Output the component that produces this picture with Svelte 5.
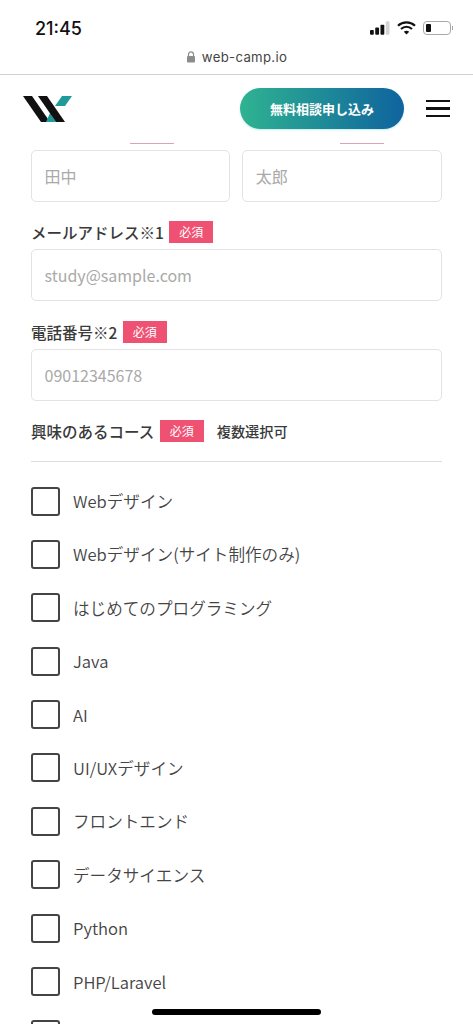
<script>
  const courses = [
    "Webデザイン",
    "Webデザイン(サイト制作のみ)",
    "はじめてのプログラミング",
    "Java",
    "AI",
    "UI/UXデザイン",
    "フロントエンド",
    "データサイエンス",
    "Python",
    "PHP/Laravel",
    "",
  ];
</script>

<div class="screen">
  <div class="status">
    <span class="time">21:45</span>
    <div class="status__icons">
      <svg width="20" height="14" viewBox="0 0 21 14">
        <rect x="0" y="9" width="4" height="5" rx="1" fill="#111" />
        <rect x="5.5" y="6.5" width="4" height="7.5" rx="1" fill="#111" />
        <rect x="11" y="3.5" width="4" height="10.5" rx="1" fill="#111" />
        <rect x="16.5" y="0" width="4" height="14" rx="1" fill="#d4d4d4" />
      </svg>
      <svg width="19" height="14" viewBox="0 0 19 14" fill="none" stroke="#111" stroke-width="2.2">
        <path d="M1 4.8 C5.8 0.3 13.2 0.3 18 4.8" />
        <path d="M4 8 C7.2 5 11.8 5 15 8" />
        <path d="M9.5 13.6 L6.8 10.8 C8.3 9.4 10.7 9.4 12.2 10.8 Z" fill="#111" stroke="none" />
      </svg>
      <div class="battery"><i></i></div>
      <div class="battery__cap"></div>
    </div>
  </div>

  <div class="urlbar">
    <svg width="10" height="12" viewBox="0 0 10 12">
      <path d="M2.5 5V3.4a2.5 2.5 0 0 1 5 0V5" fill="none" stroke="#8c8c8c" stroke-width="1.2" />
      <rect x="1" y="5" width="8" height="6.5" rx="1" fill="#8c8c8c" />
    </svg>
    <span>web-camp.io</span>
  </div>

  <header>
    <svg class="logo" width="50" height="28" viewBox="0 0 50 28">
      <path d="M0 1H9L27 27H18Z" fill="#111" />
      <path d="M23 27L27 18L33 27Z" fill="#1f9a9a" />
      <path d="M15 1H24L42 27H33Z" fill="#111" />
      <path d="M39 1H49L42 11H32Z" fill="#1f9a9a" />
    </svg>
    <div class="cta">無料相談申し込み</div>
    <div class="burger"><i></i><i></i><i></i></div>
  </header>

  <main>
    <div class="marks"><span></span><span></span></div>
    <div class="names">
      <input placeholder="田中" />
      <input placeholder="太郎" />
    </div>

    <div class="label"><b>メールアドレス※1</b><em>必須</em></div>
    <input placeholder="study@sample.com" />

    <div class="label label--tel"><b>電話番号※2</b><em>必須</em></div>
    <input placeholder="09012345678" />

    <div class="label label--course">
      <b>興味のあるコース</b><em>必須</em><b class="multi">複数選択可</b>
    </div>
    <hr />

    <ul>
      {#each courses as course}
        <li><span class="box"></span>{course}</li>
      {/each}
    </ul>
  </main>

  <div class="home"></div>
</div>

<style>
  :global(body) {
    background: #fff;
  }

  .screen {
    position: relative;
    height: 1024px;
    overflow: hidden;
    background: #fff;
    color: #3c3c3c;
    font-family: "Noto Sans CJK JP", "Noto Sans", sans-serif;
  }

  .status {
    display: flex;
    justify-content: space-between;
    align-items: center;
    height: 44px;
    padding: 12px 20px 0 35px;
    box-sizing: border-box;
  }

  .time {
    font-family: Inter, "Liberation Sans", sans-serif;
    font-size: 18px;
    font-weight: 500;
    color: #111;
  }

  .status__icons {
    display: flex;
    align-items: center;
    gap: 7px;
  }

  .battery {
    width: 28px;
    height: 14px;
    border: 1px solid #a8a8a8;
    border-radius: 4px;
    padding: 2px;
    box-sizing: border-box;
  }

  .battery i {
    display: block;
    width: 5px;
    height: 100%;
    background: #111;
    border-radius: 1px;
  }

  .battery__cap {
    width: 1.5px;
    height: 4px;
    background: #a8a8a8;
    margin-left: -6px;
  }

  .urlbar {
    display: flex;
    justify-content: center;
    align-items: center;
    gap: 6px;
    height: 26px;
    padding-bottom: 4px;
    border-bottom: 1px solid #d2d2d2;
    font-family: Inter, "Liberation Sans", sans-serif;
    font-size: 13.2px;
    color: #444;
    letter-spacing: 0.3px;
  }

  header {
    display: flex;
    align-items: center;
    height: 67px;
    padding: 0 23px;
  }

  .logo {
    margin-right: auto;
  }

  .cta {
    display: flex;
    align-items: center;
    justify-content: center;
    width: 164px;
    height: 41px;
    border-radius: 21px;
    background: linear-gradient(90deg, #2fb391, #0f639e);
    color: #fff;
    font-size: 13px;
    font-weight: 700;
    margin-right: 22px;
    box-shadow: 0 1px 2px rgba(80, 200, 200, 0.35);
  }

  .burger {
    display: flex;
    flex-direction: column;
    gap: 5px;
  }

  .burger i {
    display: block;
    width: 24px;
    height: 2.5px;
    background: #111;
  }

  main {
    display: flex;
    flex-direction: column;
    padding: 0 31.5px 0 31px;
  }

  .marks {
    display: flex;
    height: 7px;
    padding: 1px 0 0 99px;
    gap: 166px;
  }

  .marks span {
    width: 44px;
    height: 1px;
    background: #dba3b3;
  }

  .names {
    display: flex;
    gap: 12px;
  }

  .names input {
    flex: 1;
    min-width: 0;
  }

  input {
    display: block;
    width: 100%;
    height: 52px;
    box-sizing: border-box;
    border: 1.5px solid #e3e3e3;
    border-radius: 5px;
    padding: 0 12.5px;
    background: #fff;
    font-family: inherit;
    font-size: 16px;
    outline: none;
  }

  input::placeholder {
    color: #a9a9a9;
    opacity: 1;
  }

  .label {
    display: flex;
    align-items: center;
    height: 22px;
    margin: 19px 0 6px;
    font-size: 15.5px;
    line-height: 22px;
  }

  .label b {
    font-weight: 500;
    color: #3a3a3a;
  }

  .label em {
    display: flex;
    align-items: center;
    justify-content: center;
    width: 44px;
    height: 22px;
    margin-left: 5.5px;
    background: #ef5173;
    color: #fff;
    font-size: 12px;
    font-style: normal;
  }

  .label--tel {
    margin-top: 20px;
  }

  .label--course {
    margin: 19px 0 0;
  }

  .label--course .multi {
    margin-left: 13px;
    font-size: 14.2px;
  }

  hr {
    width: 100%;
    height: 1px;
    margin: 19px 0 0;
    border: 0;
    background: #dedede;
  }

  ul {
    list-style: none;
    margin: 0;
    padding: 25px 0 0;
    display: flex;
    flex-direction: column;
    gap: 25.4px;
  }

  li {
    display: flex;
    align-items: center;
    gap: 13px;
    height: 28px;
    font-size: 16.6px;
    font-weight: 350;
    color: #444;
  }

  .box {
    flex: none;
    width: 29px;
    height: 29px;
    box-sizing: border-box;
    border: 2px solid #444;
    border-radius: 3px;
  }

  .home {
    position: absolute;
    left: 152px;
    bottom: 9px;
    width: 169px;
    height: 6px;
    border-radius: 3px;
    background: #000;
  }
</style>
